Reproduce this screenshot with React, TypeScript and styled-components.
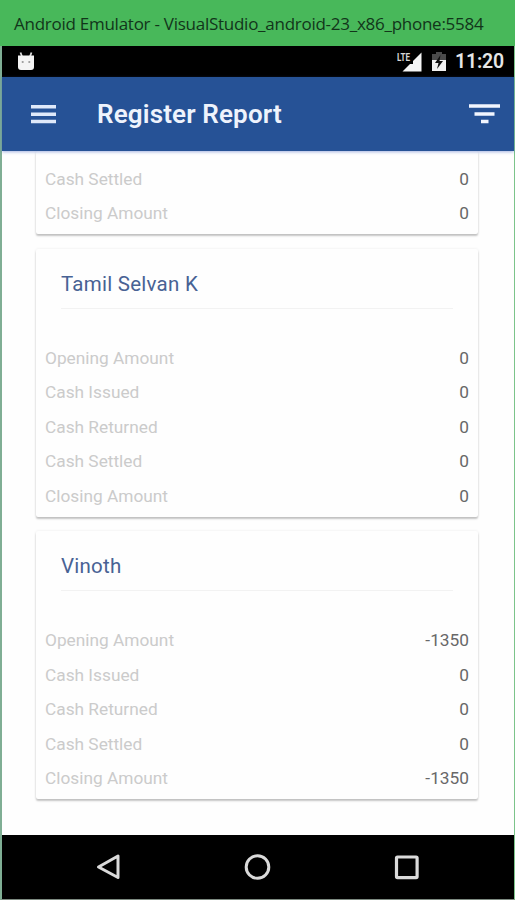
import React from 'react';
import styled, { createGlobalStyle } from 'styled-components';

const GlobalStyle = createGlobalStyle`
  * { box-sizing: border-box; }
  body { margin: 0; background: #48b557; }
  svg { display: block; flex: none; }
`;

const Emulator = styled.div`
  width: 515px;
  height: 900px;
  display: flex;
  flex-direction: column;
  overflow: hidden;
  background: #48b85a;
  font-family: Roboto, sans-serif;
`;

const TitleBar = styled.div`
  height: 46px;
  flex: none;
  padding: 0 0 0 14px;
  line-height: 47px;
  font-family: 'Open Sans', sans-serif;
  font-size: 17px;
  color: #12351a;
  white-space: nowrap;
`;

const TitleText = styled.span`
  letter-spacing: -0.26px;
`;

const Screen = styled.div`
  flex: 1;
  min-height: 0;
  border-left: 2px solid #7fae94;
  border-right: 1px solid #7cc48a;
  border-bottom: 1px solid #7d8a80;
  display: flex;
  flex-direction: column;
  background: #fefefe;
`;

const StatusBar = styled.div`
  height: 31px;
  flex: none;
  display: flex;
  align-items: center;
  padding: 0 11px 0 15px;
  background: #000;
`;

const StatusIcons = styled.div`
  margin-left: auto;
  display: flex;
  align-items: center;
`;

const Clock = styled.span`
  width: 48px;
  margin-left: 9px;
  text-align: right;
  font-size: 19.5px;
  letter-spacing: -0.2px;
  line-height: 31px;
  font-weight: 600;
  color: #e6e6e6;
`;

const AppBar = styled.header`
  height: 74px;
  flex: none;
  display: flex;
  align-items: center;
  padding: 0 14px 0 27px;
  background: #265296;
  box-shadow: 0 1px 3px rgba(60, 90, 190, 0.45);
  z-index: 1;
`;

const PageTitle = styled.h1`
  margin: 0 auto 0 41px;
  font-size: 26px;
  letter-spacing: 0.15px;
  line-height: 75px;
  font-weight: 600;
  color: #eef3fc;
`;

const Content = styled.main`
  flex: 1;
  min-height: 0;
  overflow: hidden;
  display: flex;
  flex-direction: column;
  gap: 14.5px;
  padding: 0 36px 0 34px;
`;

const Card = styled.section<{ $scrolled?: boolean }>`
  flex: none;
  padding: ${p => (p.$scrolled ? '10.6px' : '0')} 9px 3.5px 9px;
  border-radius: 2px;
  background: #fefefe;
  box-shadow: 0 2px 2px rgba(0, 0, 0, 0.22), 0 0 3px rgba(0, 0, 0, 0.08);
`;

const CardHeader = styled.h2`
  height: 60px;
  margin: 0 16px 31.5px 16px;
  padding-top: 12px;
  border-bottom: 1px solid #f2f2f2;
  font-size: 20.5px;
  letter-spacing: 0.25px;
  line-height: 47px;
  font-weight: 400;
  color: #486294;
`;

const Row = styled.div`
  height: 34.6px;
  display: flex;
  align-items: center;
  justify-content: space-between;
  line-height: 34px;
`;

const Label = styled.span`
  font-size: 17.3px;
  color: #cbcbcb;
`;

const Value = styled.span`
  font-size: 17.3px;
  color: #686868;
`;

const NavBar = styled.nav`
  height: 64px;
  flex: none;
  display: flex;
  align-items: center;
  justify-content: space-between;
  padding: 0 92px 1px;
  background: #000;
`;

const fields = ['Opening Amount', 'Cash Issued', 'Cash Returned', 'Cash Settled', 'Closing Amount'];

interface Register {
  name?: string;
  values: number[];
}

const registers: Register[] = [
  { values: [0, 0] },
  { name: 'Tamil Selvan K', values: [0, 0, 0, 0, 0] },
  { name: 'Vinoth', values: [-1350, 0, 0, 0, -1350] },
];

const RegisterCard = ({ name, values }: Register) => (
  <Card $scrolled={!name}>
    {name && <CardHeader>{name}</CardHeader>}
    {fields.slice(fields.length - values.length).map((field, i) => (
      <Row key={field}>
        <Label>{field}</Label>
        <Value>{values[i]}</Value>
      </Row>
    ))}
  </Card>
);

const DebugIcon = () => (
  <svg width="18" height="20" viewBox="0 0 18 20">
    <path d="M3.5 .5l1.5 4M14.5 .5l-1.5 4" stroke="#ddd" strokeWidth="1.8" />
    <path d="M1 3.5h16v11.5a3 3 0 0 1-3 3H4a3 3 0 0 1-3-3z" fill="#f4f4f4" />
    <circle cx="5.7" cy="10" r="1.1" fill="#999" />
    <circle cx="12.3" cy="10" r="1.1" fill="#999" />
  </svg>
);

const SignalText = styled.text`
  font: 700 11px Roboto, sans-serif;
  fill: #d5d5d5;
`;

const SignalIcon = () => (
  <svg width="25" height="22" viewBox="0 0 25 22">
    <path d="M24.5 1.5V20.5H5.5z" fill="#f5f5f5" />
    <path d="M5 11.5h9.5V5" fill="none" stroke="#000" strokeWidth="3" />
    <SignalText x="0" y="9.5" textLength="13" lengthAdjust="spacingAndGlyphs">LTE</SignalText>
  </svg>
);

const BatteryIcon = () => (
  <svg width="14" height="21" viewBox="0 0 14 21">
    <path d="M4 1h6v2h4v7H0V3h4z" fill="#4b4b4b" />
    <path d="M0 9h14v11H0z" fill="#f2f2f2" />
    <path d="M8.5 4L3 12h3.5L5 18l6-8H7.5z" fill="#111" />
  </svg>
);

const BatterySlot = styled.div`
  margin-left: 10px;
`;

const MenuIcon = () => (
  <svg width="27" height="20" viewBox="0 0 27 20">
    <path d="M2 2.7h25M2 10.2h25M2 17.5h25" stroke="#dfe9fa" strokeWidth="3.5" />
  </svg>
);

const FilterIcon = () => (
  <svg width="31" height="20" viewBox="0 0 31 20">
    <path d="M0 2h31M5.5 10h20M12 17.5h7.5" stroke="#f2f6ff" strokeWidth="3.6" />
  </svg>
);

const BackIcon = () => (
  <svg width="30" height="30" viewBox="0 0 30 30">
    <path d="M24 4v21.5L4.5 15z" fill="none" stroke="#dadada" strokeWidth="3" strokeLinejoin="round" />
  </svg>
);

const HomeIcon = () => (
  <svg width="30" height="30" viewBox="0 0 30 30">
    <circle cx="14.5" cy="15" r="11.3" fill="none" stroke="#dadada" strokeWidth="3" />
  </svg>
);

const RecentsIcon = () => (
  <svg width="30" height="30" viewBox="0 0 30 30">
    <rect x="4.5" y="5" width="20.6" height="20.6" rx="1" fill="none" stroke="#dadada" strokeWidth="3.2" />
  </svg>
);

export default function App() {
  return (
    <Emulator>
      <GlobalStyle />
      <TitleBar>
        <TitleText>Android Emulator - VisualStudio_android-23_x86_phone:5584</TitleText>
      </TitleBar>
      <Screen>
        <StatusBar>
          <DebugIcon />
          <StatusIcons>
            <SignalIcon />
            <BatterySlot>
              <BatteryIcon />
            </BatterySlot>
            <Clock>11:20</Clock>
          </StatusIcons>
        </StatusBar>
        <AppBar>
          <MenuIcon />
          <PageTitle>Register Report</PageTitle>
          <FilterIcon />
        </AppBar>
        <Content>
          {registers.map((register, i) => (
            <RegisterCard key={i} {...register} />
          ))}
        </Content>
        <NavBar>
          <BackIcon />
          <HomeIcon />
          <RecentsIcon />
        </NavBar>
      </Screen>
    </Emulator>
  );
}
